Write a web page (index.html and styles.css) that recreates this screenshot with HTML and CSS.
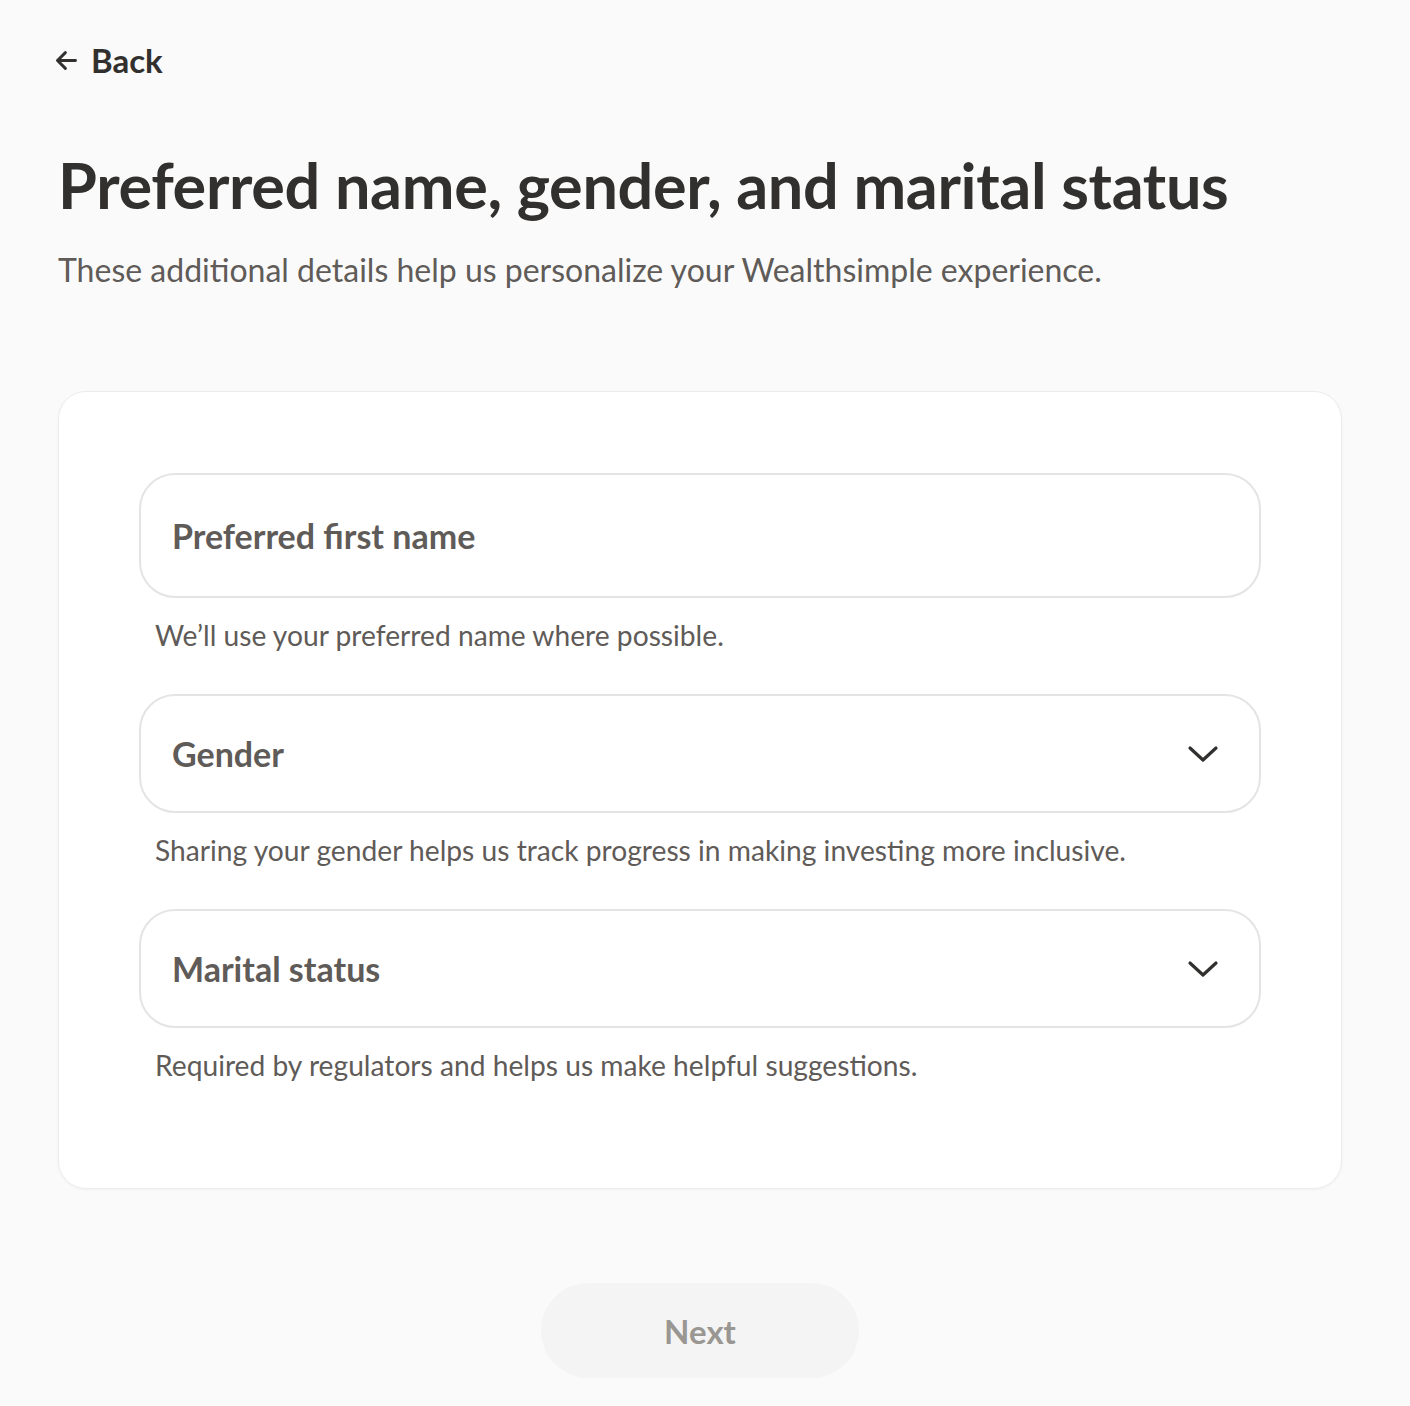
FILE: index.html
```html
<!DOCTYPE html>
<html lang="en">
<head>
<meta charset="utf-8">
<title>Preferred name, gender, and marital status</title>
<link rel="stylesheet" href="styles.css">
</head>
<body>
<div class="page">
  <a class="back" href="#">
    <svg class="back-icon" width="24" height="24" viewBox="0 0 24 24" fill="none" stroke="currentColor" stroke-width="2.6" stroke-linecap="round" stroke-linejoin="round"><path d="M20 12H4M11 5l-7 7 7 7"/></svg>
    <span>Back</span>
  </a>
  <h1 class="title">Preferred name, gender, and marital status</h1>
  <p class="subtitle">These additional details help us personalize your Wealthsimple experience.</p>

  <div class="card">
    <div class="field field-text">
      <span class="field-label">Preferred first name</span>
    </div>
    <p class="helper">We’ll use your preferred name where possible.</p>

    <div class="field field-select">
      <span class="field-label">Gender</span>
      <svg class="chevron" width="32" height="20" viewBox="0 0 32 20" fill="none" stroke="currentColor" stroke-width="3.2" stroke-linecap="round" stroke-linejoin="round"><path d="M3 4l13 12L29 4"/></svg>
    </div>
    <p class="helper">Sharing your gender helps us track progress in making investing more inclusive.</p>

    <div class="field field-select">
      <span class="field-label">Marital status</span>
      <svg class="chevron" width="32" height="20" viewBox="0 0 32 20" fill="none" stroke="currentColor" stroke-width="3.2" stroke-linecap="round" stroke-linejoin="round"><path d="M3 4l13 12L29 4"/></svg>
    </div>
    <p class="helper">Required by regulators and helps us make helpful suggestions.</p>
  </div>

  <div class="actions">
    <button class="next" type="button">Next</button>
  </div>
</div>
</body>
</html>
```

FILE: styles.css
```css
* { box-sizing: border-box; }
html, body { margin: 0; padding: 0; }
body {
  background: #fafafa;
  font-family: "Lato", "Noto Sans", sans-serif;
  color: #32302e;
}
.page {
  padding: 38px 68px 28px 58px;
  display: flex;
  flex-direction: column;
}
.back {
  display: inline-flex;
  align-items: center;
  gap: 11px;
  text-decoration: none;
  color: #32302e;
  font-weight: 700;
  font-size: 33px;
  line-height: 44px;
  margin-left: -5px;
  align-self: flex-start;
}
.back-icon { width: 27px; height: 27px; }
.title {
  margin: 67px 0 0 0;
  font-size: 63px;
  line-height: 72px;
  font-weight: 700;
  letter-spacing: -0.35px;
  color: #32302e;
}
.subtitle {
  margin: 29px 0 0 0;
  font-size: 32px;
  line-height: 40px;
  color: #5f5b58;
  font-weight: 400;
}
.card {
  margin-top: 101px;
  background: #fff;
  border: 1px solid #ececec;
  border-radius: 28px;
  box-shadow: 0 1px 3px rgba(0,0,0,0.04);
  padding: 81px 80px 105px 80px;
  display: flex;
  flex-direction: column;
}
.field {
  border: 2px solid #e4e4e4;
  border-radius: 36px;
  display: flex;
  align-items: center;
  justify-content: space-between;
  padding: 0 40px 0 31px;
  background: #fff;
}
.field-text { height: 125px; }
.field-select { height: 119px; }
.field-label {
  font-size: 34px;
  font-weight: 700;
  color: #5f5b58;
}
.chevron { color: #32302e; width: 32px; height: 20px; }
.helper {
  margin: 19px 0 41px 16px;
  font-size: 28.2px;
  line-height: 36px;
  color: #5f5b58;
}
.helper:last-child { margin-bottom: 0; }
.actions {
  display: flex;
  justify-content: center;
  margin-top: 94px;
}
.next {
  width: 318px;
  height: 95px;
  border: none;
  border-radius: 48px;
  background: #f4f4f4;
  color: #9a9692;
  font-family: inherit;
  font-size: 33px;
  font-weight: 700;
  cursor: default;
}
```
